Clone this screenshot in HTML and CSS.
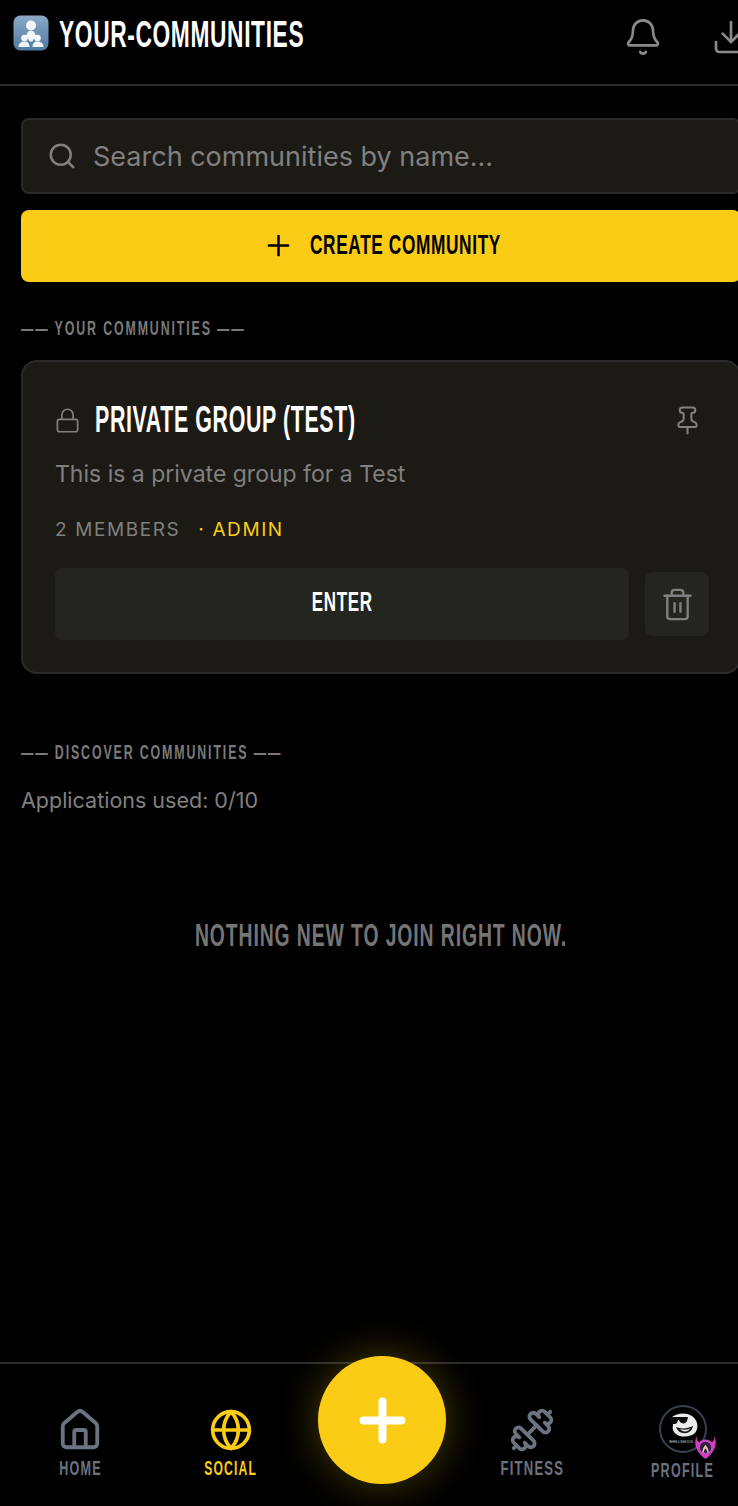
FILE: index.html
```html
<!DOCTYPE html>
<html lang="en">
<head>
<meta charset="utf-8">
<title>Your Communities</title>
<link rel="stylesheet" href="styles.css">
</head>
<body>
<div class="app">
  <header class="topbar">
    <div class="brand">
      <svg class="brand-icon" viewBox="0 0 36 36">
        <defs><linearGradient id="tile" x1="0" y1="0" x2="0" y2="1"><stop offset="0" stop-color="#8aa9c6"/><stop offset="1" stop-color="#4f7aa3"/></linearGradient></defs>
        <rect x="0.5" y="0.5" width="35" height="35" rx="7" fill="url(#tile)"/>
        <g fill="#f4f6f8">
          <circle cx="18" cy="10.500" r="5"/>
          <path d="M13.500 21c0-3.200 1.700-5.200 4.500-5.200s4.500 2 4.500 5.200l-3.200 5.500h-2.600z"/>
          <circle cx="11.500" cy="23" r="3.300"/>
          <circle cx="24.500" cy="23" r="3.300"/>
          <path d="M5.500 32c0-3.500 2.500-5.500 6-5.500s5 2 5 5.500z"/>
          <path d="M19.500 32c0-3.500 1.500-5.500 5-5.500s6 2 6 5.500z"/>
        </g>
      </svg>
      <h1 class="brand-title">YOUR-COMMUNITIES</h1>
    </div>
    <div class="top-actions">
      <svg class="top-icon" viewBox="0 0 24 24"><path d="M10.300 21a1.940 1.940 0 0 0 3.400 0"/><path d="M3.300 15.300A1 1 0 0 0 4 17h16a1 1 0 0 0 .7-1.700C19.400 14 18 12.500 18 8A6 6 0 0 0 6 8c0 4.500-1.400 6-2.700 7.300"/></svg>
      <svg class="top-icon" viewBox="0 0 24 24"><path d="M21 15v4a2 2 0 0 1-2 2H5a2 2 0 0 1-2-2v-4"/><path d="m7 10 5 5 5-5"/><path d="M12 15V3"/></svg>
    </div>
  </header>

  <main class="content">
    <div class="search">
      <svg class="search-icon" viewBox="0 0 24 24"><circle cx="11" cy="11" r="8"/><path d="m21 21-4.300-4.300"/></svg>
      <span class="search-text">Search communities by name...</span>
    </div>
    <button class="create" type="button">
      <svg class="create-icon" viewBox="0 0 24 24"><path d="M5 12h14"/><path d="M12 5v14"/></svg>
      <span class="create-label">CREATE COMMUNITY</span>
    </button>

    <h2 class="section-label first">—— YOUR COMMUNITIES ——</h2>
    <article class="card">
      <div class="card-head">
        <svg class="lock" viewBox="0 0 24 24"><rect x="3" y="11" width="18" height="11" rx="2"/><path d="M7 11V7a5 5 0 0 1 10 0v4"/></svg>
        <h3 class="card-title">PRIVATE GROUP (TEST)</h3>
        <svg class="pin" viewBox="0 0 24 24"><path d="M12 17v5"/><path d="M9 10.760a2 2 0 0 1-1.110 1.790l-1.780.9A2 2 0 0 0 5 15.240V16a1 1 0 0 0 1 1h12a1 1 0 0 0 1-1v-.76a2 2 0 0 0-1.110-1.790l-1.780-.9A2 2 0 0 1 15 10.760V7a1 1 0 0 1 1-1 2 2 0 0 0 0-4H8a2 2 0 0 0 0 4 1 1 0 0 1 1 1z"/></svg>
      </div>
      <p class="card-desc">This is a private group for a Test</p>
      <p class="card-meta"><span>2 MEMBERS</span><span class="role">· ADMIN</span></p>
      <div class="card-actions">
        <button class="enter" type="button"><span class="enter-label">ENTER</span></button>
        <button class="trash" type="button" aria-label="Delete">
          <svg class="trash-icon" viewBox="0 0 24 24"><path d="M10 11v6"/><path d="M14 11v6"/><path d="M19 6v14a2 2 0 0 1-2 2H7a2 2 0 0 1-2-2V6"/><path d="M3 6h18"/><path d="M8 6V4a2 2 0 0 1 2-2h4a2 2 0 0 1 2 2v2"/></svg>
        </button>
      </div>
    </article>

    <h2 class="section-label second">—— DISCOVER COMMUNITIES ——</h2>
    <p class="apps-used">Applications used: 0/10</p>
    <p class="empty">NOTHING NEW TO JOIN RIGHT NOW.</p>
  </main>

  <nav class="nav">
    <a class="nav-item">
      <svg class="nav-icon home" viewBox="0 0 24 24"><path d="M15 21v-8a1 1 0 0 0-1-1h-4a1 1 0 0 0-1 1v8"/><path d="M3 10a2 2 0 0 1 .709-1.528l7-5.999a2 2 0 0 1 2.582 0l7 5.999A2 2 0 0 1 21 10v9a2 2 0 0 1-2 2H5a2 2 0 0 1-2-2z"/></svg>
      <span class="nav-label">HOME</span>
    </a>
    <a class="nav-item active">
      <svg class="nav-icon" viewBox="0 0 24 24"><circle cx="12" cy="12" r="10"/><path d="M12 2a14.500 14.500 0 0 0 0 20 14.500 14.500 0 0 0 0-20"/><path d="M2 12h20"/></svg>
      <span class="nav-label">SOCIAL</span>
    </a>
    <div class="nav-slot"></div>
    <a class="nav-item fitness">
      <svg class="nav-icon flip" viewBox="0 0 24 24"><path d="M14.400 14.400 9.600 9.600"/><path d="M18.657 21.485a2 2 0 1 1-2.829-2.828l-1.767 1.768a2 2 0 1 1-2.829-2.829l6.364-6.364a2 2 0 1 1 2.829 2.829l-1.768 1.767a2 2 0 1 1 2.828 2.829z"/><path d="m21.500 21.500-1.400-1.400"/><path d="M3.900 3.900 2.500 2.500"/><path d="M6.404 12.768a2 2 0 1 1-2.829-2.829l1.768-1.767a2 2 0 1 1-2.828-2.829l2.828-2.828a2 2 0 1 1 2.829 2.828l1.767-1.768a2 2 0 1 1 2.829 2.829z"/></svg>
      <span class="nav-label">FITNESS</span>
    </a>
    <a class="nav-item profile">
      <span class="avatar-wrap">
        <svg class="avatar" viewBox="0 0 48 48">
          <circle cx="24" cy="24" r="23" fill="#000" stroke="#374151" stroke-width="2"/>
          <path d="M13 12c5-4 14-5 20-1 6 4 7 12 3 17-4 4-14 5-19 1-3-2-4-5-3-9z" fill="#ececec"/>
          <path d="M10 12h19l-1 4c-1 3-5 3-7 1l-1-2h-1l-1 3c-2 2-5 1-6-1z" fill="#0c0c0c"/>
          <path d="M17 22c5 2 11 2 17-1-1 5-5 8-10 7-3 0-6-3-7-6z" fill="#1a1a1a"/>
          <path d="M21 24c3 1 7 1 10-.5-1 2-3 3-5 3s-4-1-5-2.500z" fill="#e8e8e8"/>
          <text class="avatar-text" x="22" y="38" text-anchor="middle">SHELLSHOCK</text>
        </svg>
        <svg class="badge" viewBox="0 0 24 28">
          <path d="M2 1c0 4 1 6 3 7 2-2 4-3 7-3s5 1 7 3c2-1 3-3 3-7 2 5 2 10 0 14-2 5-6 9-10 12-4-3-8-7-10-12C0 11 0 6 2 1z" fill="#d93ac0"/>
          <circle cx="12" cy="14" r="7" fill="#3a1c46" stroke="#b06ae0"/>
          <path d="M8.500 20c0-4 1-6 3.500-9 2.500 3 3.500 5 3.500 9z" fill="#e6c7ae"/>
          <path d="M10 20c0-2 1-4 2-5 1 1 2 3 2 5z" fill="#24122c"/>
        </svg>
      </span>
      <span class="nav-label">PROFILE</span>
    </a>
  </nav>

  <button class="fab" type="button" aria-label="Create">
    <svg class="fab-icon" viewBox="0 0 24 24"><path d="M5 12h14"/><path d="M12 5v14"/></svg>
  </button>
</div>
</body>
</html>
```

FILE: styles.css
```css
* { box-sizing: border-box; }
html, body { margin: 0; padding: 0; background: #000; overflow: hidden; height: 100%; }
body { font-family: "Inter", "Liberation Sans", sans-serif; color: #fff; }
h1, h2, h3, p { margin: 0; font-weight: 400; }
button { font: inherit; border: 0; padding: 0; }

.app { position: relative; width: 762px; height: 1506px; display: flex; flex-direction: column; background: #000; }

/* Condensed display type: narrowed from the bold sans */
.brand-title, .create-label, .section-label, .card-title, .enter-label, .empty, .nav-label { font-family: "Liberation Sans", sans-serif; font-weight: 700; white-space: nowrap; }

.topbar { height: 86px; flex: none; display: flex; align-items: flex-start; justify-content: space-between; padding: 14px 11px 0 13px; border-bottom: 2px solid #2a2a2a; }
.brand { display: flex; align-items: center; gap: 10px; height: 40px; }
.brand-icon { width: 36px; height: 36px; margin-top: -2px; flex: none; }
.brand-title { font-size: 36px; line-height: 40px; letter-spacing: 1px; transform: scaleX(.632); transform-origin: left center; margin-top: 1px; }
.top-actions { display: flex; gap: 48px; margin-top: 3px; }
.top-icon { width: 40px; height: 40px; fill: none; stroke: #8a8a8a; stroke-width: 1.600; stroke-linecap: round; stroke-linejoin: round; }

.content { flex: 1; padding: 32px 21px 0; display: flex; flex-direction: column; }
.search { height: 76px; flex: none; display: flex; align-items: center; gap: 16px; padding: 0 24px; background: #1c1a14; border: 2px solid #2a2a2a; border-radius: 8px; }
.search-icon { width: 30px; height: 30px; flex: none; fill: none; stroke: #808080; stroke-width: 2; stroke-linecap: round; }
.search-text { font-size: 27px; color: #808080; white-space: nowrap; }
.create { height: 72px; flex: none; margin-top: 16px; padding-bottom: 2px; display: flex; align-items: center; justify-content: center; gap: 15px; background: #facc15; border-radius: 8px; color: #000; }
.create-label { width: 190px; font-size: 28px; letter-spacing: 1px; text-align: left; transform: scaleX(.617); transform-origin: left center; }
.create-icon { width: 33px; height: 33px; flex: none; fill: none; stroke: #000; stroke-width: 1.800; stroke-linecap: round; }

.section-label { font-size: 20px; line-height: 22px; letter-spacing: 3px; color: #7a7a7a; transform: scaleX(.62); transform-origin: left center; }
.section-label.first { margin-top: 35px; }
.section-label.second { margin-top: 67px; }

.card { height: 314px; flex: none; margin-top: 21px; padding: 32px 30px 0 32px; background: #1c1a14; border: 2px solid #2a2a2a; border-radius: 16px; display: flex; flex-direction: column; }
.card-head { display: flex; align-items: center; height: 52px; }
.lock { width: 27px; height: 27px; flex: none; margin-left: -1px; margin-right: 14px; fill: none; stroke: #808080; stroke-width: 1.500; }
.card-title { flex: 1; font-size: 36px; line-height: 40px; letter-spacing: 1px; transform: scaleX(.595); transform-origin: left center; }
.pin { width: 31px; height: 31px; flex: none; margin-right: 6px; fill: none; stroke: #808080; stroke-width: 1.600; stroke-linecap: round; stroke-linejoin: round; }
.card-desc { font-size: 23px; line-height: 32px; margin-top: 12px; color: #808080; }
.card-meta { display: flex; gap: 18px; margin-top: 28px; font-size: 19px; line-height: 24px; letter-spacing: 1.600px; color: #808080; }
.role { color: #facc15; }
.card-actions { display: flex; align-items: center; gap: 16px; margin-top: 26px; }
.enter { flex: 1; height: 72px; padding-bottom: 3px; background: #25251f; border-radius: 8px; color: #fff; display: flex; align-items: center; justify-content: center; }
.enter-label { font-size: 27px; letter-spacing: 1px; transform: scaleX(.63); }
.trash { width: 64px; height: 64px; flex: none; background: #25251f; border-radius: 8px; display: flex; align-items: center; justify-content: center; }
.trash-icon { width: 35px; height: 35px; fill: none; stroke: #808080; stroke-width: 1.600; stroke-linecap: round; stroke-linejoin: round; }

.apps-used { font-size: 21.500px; line-height: 32px; margin-top: 21px; color: #808080; }
.empty { margin-top: 99px; text-align: center; font-size: 32px; line-height: 40px; letter-spacing: 1.500px; color: #757575; transform: scaleX(.605); }

.nav { height: 144px; flex: none; display: grid; grid-template-columns: repeat(5, 1fr); padding: 0 5px; border-top: 2px solid #2a2a2a; }
.nav-item { display: flex; flex-direction: column; align-items: center; padding-top: 44px; color: #6b7280; }
.nav-label { display: block; font-size: 21px; line-height: 24px; letter-spacing: 2px; margin-top: 4px; transform: scaleX(.6); }
.nav-item.active { color: #facc15; }
.active .nav-label { transform: scaleX(.578); }
.fitness .nav-label { transform: scaleX(.62); margin-left: 2px; }
.nav-icon { width: 44px; height: 44px; flex: none; fill: none; stroke: currentColor; stroke-width: 2; stroke-linecap: round; stroke-linejoin: round; }
.nav-icon.home { width: 46px; height: 46px; margin-top: -1px; margin-bottom: -1px; }
.flip { transform: scaleX(-1); margin-left: 2px; }
.fitness .nav-icon { width: 46px; height: 46px; margin-top: -1px; margin-bottom: -1px; }
.profile { padding-top: 41px; }
.avatar-wrap { position: relative; display: block; width: 48px; height: 48px; margin-left: 2px; flex: none; }
.profile .nav-label { margin-top: 5px; margin-left: 2px; }
.avatar { width: 48px; height: 48px; display: block; }
.avatar-text { font-family: "Liberation Sans", sans-serif; font-size: 3.600px; fill: #ddd; }
.badge { position: absolute; left: 35px; top: 30px; width: 23px; height: 25px; }

.fab { position: absolute; left: 318px; top: 1356px; width: 128px; height: 128px; border-radius: 50%; background: #facc15; box-shadow: 0 0 40px rgba(250, 204, 21, 0.3); display: flex; align-items: center; justify-content: center; }
.fab-icon { width: 65px; height: 65px; fill: none; stroke: #fff; stroke-width: 2.950; stroke-linecap: round; }
```
